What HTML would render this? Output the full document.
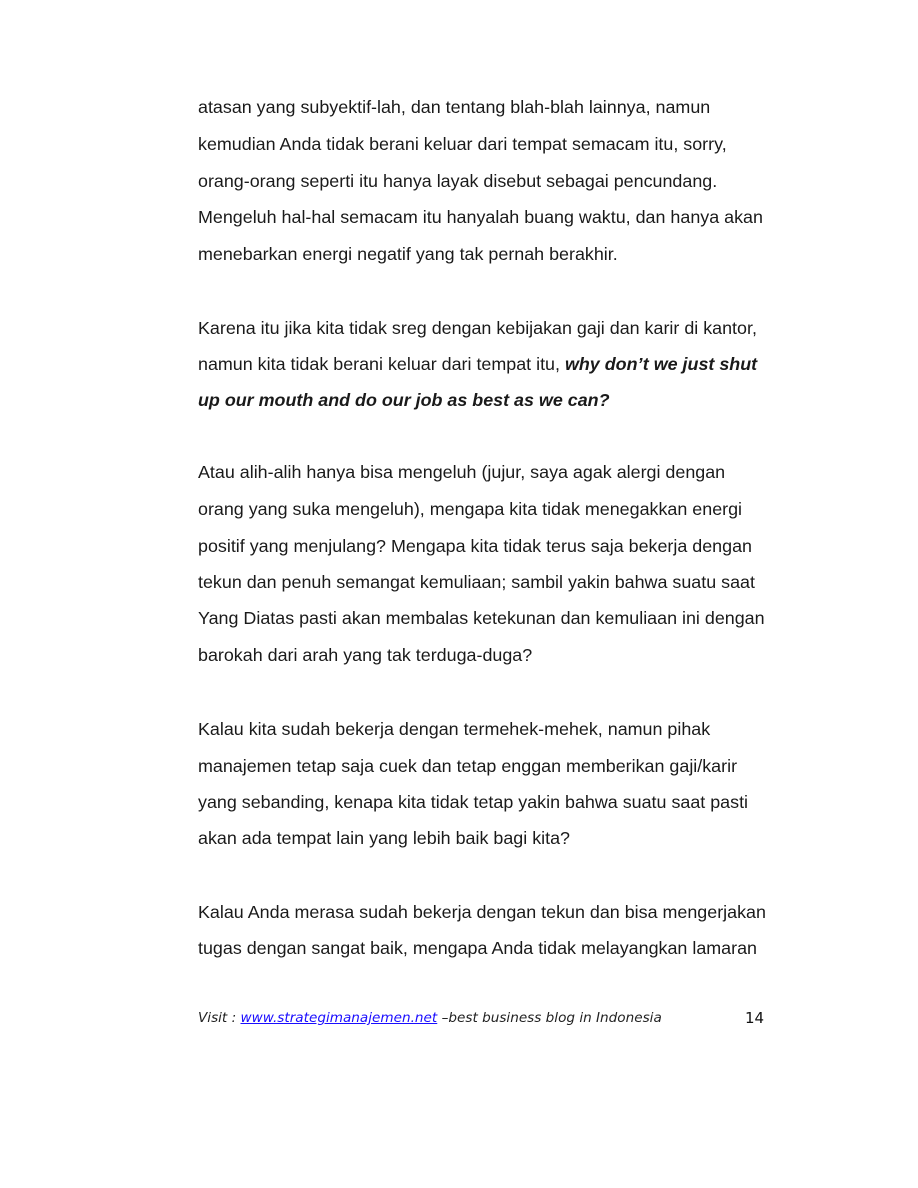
<!DOCTYPE html>
<html><head><meta charset="utf-8"><style>
html,body{margin:0;padding:0;background:#fff;}
body{width:918px;height:1188px;position:relative;overflow:hidden;font-family:"Liberation Sans","DejaVu Sans",sans-serif;color:#1a1a1a;}
.l{position:absolute;left:198px;font-size:17.9px;white-space:nowrap;line-height:20px;}
.b{font-weight:bold;font-style:italic;}
.f{position:absolute;top:1010px;left:198px;font-family:"DejaVu Sans",sans-serif;font-style:italic;font-size:13.6px;color:#222;white-space:nowrap;}
.f a{color:#1a0dff;text-decoration:underline;}
.p{position:absolute;top:1009px;left:745px;font-family:"DejaVu Sans",sans-serif;font-size:15px;color:#111;}
</style></head><body>
<div class="l" style="top:97px">atasan yang subyektif-lah, dan tentang blah-blah lainnya, namun</div>
<div class="l" style="top:134px">kemudian Anda tidak berani keluar dari tempat semacam itu, sorry,</div>
<div class="l" style="top:171px">orang-orang seperti itu hanya layak disebut sebagai pencundang.</div>
<div class="l" style="top:207px">Mengeluh hal-hal semacam itu hanyalah buang waktu, dan hanya akan</div>
<div class="l" style="top:244px">menebarkan energi negatif yang tak pernah berakhir.</div>
<div class="l" style="top:318px">Karena itu jika kita tidak sreg dengan kebijakan gaji dan karir di kantor,</div>
<div class="l" style="top:354px">namun kita tidak berani keluar dari tempat itu, <span class="b">why don’t we just shut</span></div>
<div class="l b" style="top:390px">up our mouth and do our job as best as we can?</div>
<div class="l" style="top:462px">Atau alih-alih hanya bisa mengeluh (jujur, saya agak alergi dengan</div>
<div class="l" style="top:499px">orang yang suka mengeluh), mengapa kita tidak menegakkan energi</div>
<div class="l" style="top:536px">positif yang menjulang? Mengapa kita tidak terus saja bekerja dengan</div>
<div class="l" style="top:572px">tekun dan penuh semangat kemuliaan; sambil yakin bahwa suatu saat</div>
<div class="l" style="top:608px">Yang Diatas pasti akan membalas ketekunan dan kemuliaan ini dengan</div>
<div class="l" style="top:645px">barokah dari arah yang tak terduga-duga?</div>
<div class="l" style="top:719px">Kalau kita sudah bekerja dengan termehek-mehek, namun pihak</div>
<div class="l" style="top:756px">manajemen tetap saja cuek dan tetap enggan memberikan gaji/karir</div>
<div class="l" style="top:792px">yang sebanding, kenapa kita tidak tetap yakin bahwa suatu saat pasti</div>
<div class="l" style="top:828px">akan ada tempat lain yang lebih baik bagi kita?</div>
<div class="l" style="top:902px">Kalau Anda merasa sudah bekerja dengan tekun dan bisa mengerjakan</div>
<div class="l" style="top:938px">tugas dengan sangat baik, mengapa Anda tidak melayangkan lamaran</div>
<div class="f">Visit : <a>www.strategimanajemen.net</a> –best business blog in Indonesia</div>
<div class="p">14</div>
</body></html>
